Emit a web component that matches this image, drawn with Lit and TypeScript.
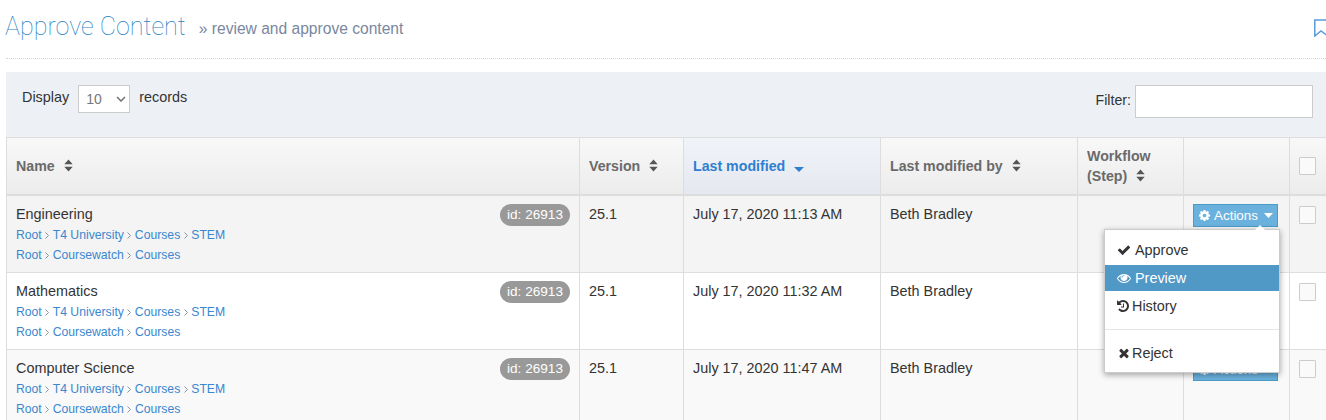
import { LitElement, html, css, svg } from "lit";
import { customElement } from "lit/decorators.js";

const P = {
  check: "M1671 566q0 40-28 68l-724 724-136 136q-28 28-68 28t-68-28l-136-136-362-362q-28-28-28-68t28-68l136-136q28-28 68-28t68 28l294 295 656-657q28-28 68-28t68 28l136 136q28 28 28 68z",
  times: "M1490 1322q0 40-28 68l-136 136q-28 28-68 28t-68-28l-294-294-294 294q-28 28-68 28t-68-28l-136-136q-28-28-28-68t28-68l294-294-294-294q-28-28-28-68t28-68l136-136q28-28 68-28t68 28l294 294 294-294q28-28 68-28t68 28l136 136q28 28 28 68t-28 68l-294 294 294 294q28 28 28 68z",
  eye: "M1664 960q-152-236-381-353 61 104 61 225 0 185-131.500 316.500t-316.500 131.500-316.500-131.500-131.500-316.500q0-121 61-225-229 117-381 353 133 205 333.500 326.500t434.500 121.500 434.500-121.500 333.500-326.500zm-720-384q0-20-14-34t-34-14q-125 0-214.500 89.500t-89.500 214.500q0 20 14 34t34 14 34-14 14-34q0-86 61-147t147-61q20 0 34-14t14-34zm848 384q0 34-20 69-140 230-376.500 368.500t-499.500 138.500-499.500-139-376.500-368q-20-35-20-69t20-69q140-229 376.500-368t499.500-139 499.500 139 376.500 368q20 35 20 69z",
  history: "M1664 896q0 156-61 298t-164 245-245 164-298 61q-172 0-327-72.500t-264-204.500q-7-10-6.500-22.500t8.500-20.500l137-138q10-9 25-9 16 2 23 12 73 95 179 147t225 52q104 0 198.500-40.500t163.500-109.500 109.500-163.500 40.500-198.500-40.500-198.500-109.500-163.500-163.500-109.500-198.500-40.500q-98 0-188 35.500t-160 101.500l137 138q31 30 14 69-17 40-59 40h-448q-26 0-45-19t-19-45v-448q0-42 40-59 39-17 69 14l130 129q107-101 244.500-156.500t284.500-55.500q156 0 298 61t245 164 164 245 61 298zm-640-288v448q0 14-9 23t-23 9h-320q-14 0-23-9t-9-23v-64q0-14 9-23t23-9h224v-352q0-14 9-23t23-9h64q14 0 23 9t9 23z",
  cog: "M1152 896q0-106-75-181t-181-75-181 75-75 181 75 181 181 75 181-75 75-181zm512-109v222q0 12-8 23t-20 13l-185 28q-19 54-39 91 35 50 107 138 10 12 10 25t-9 23q-27 37-99 108t-94 71q-12 0-26-9l-138-108q-44 23-91 38-16 136-29 186-7 28-36 28h-222q-14 0-24.500-8.500t-11.500-21.500l-28-184q-49-16-90-37l-141 107q-10 9-25 9-14 0-25-11-126-114-165-168-7-10-7-23 0-12 8-23 15-21 51-66.500t54-70.500q-27-50-41-99l-183-27q-13-2-21-12.500t-8-23.500v-222q0-12 8-23t19-13l186-28q14-46 39-92-40-57-107-138-10-12-10-24 0-10 9-23 26-36 98.500-107.500t94.500-71.500q13 0 26 10l138 107q44-23 91-38 16-136 29-186 7-28 36-28h222q14 0 24.500 8.500t11.500 21.500l28 184q49 16 90 37l142-107q9-9 24-9 13 0 25 10 129 119 165 170 7 8 7 22 0 12-8 23-15 21-51 66.500t-54 70.500q26 50 41 98l183 28q13 2 21 12.500t8 23.500z",
};
const fa = (d: string, size = 14) =>
  html`<svg class="fa" width=${size} height=${size} viewBox="0 0 1792 1792" fill="currentColor">${svg`<path d=${d}></path>`}</svg>`;

const sort = html`<svg class="sort" width="9" height="13" viewBox="0 0 9 13" fill="currentColor"><path d="M4.5 .5 L8.7 5.2 H.3 Z M.3 7.8 H8.7 L4.5 12.5 Z"></path></svg>`;
const sortDown = html`<svg class="sortdown" width="10" height="5" viewBox="0 0 10 5" fill="currentColor"><path d="M0 0 H10 L5 5 Z"></path></svg>`;
const caret = html`<svg class="caret" width="9" height="5" viewBox="0 0 9 5" fill="currentColor"><path d="M0 0 H9 L4.5 5 Z"></path></svg>`;

const ROWS = [
  { name: "Engineering", time: "July 17, 2020 11:13 AM", cls: "hover" },
  { name: "Mathematics", time: "July 17, 2020 11:32 AM", cls: "even" },
  { name: "Computer Science", time: "July 17, 2020 11:47 AM", cls: "odd" },
];

const crumbs = (items: string[]) =>
  html`<div class="crumb">${items.map((t, i) => html`${i ? html`<svg class="sep" width="4" height="7" viewBox="0 0 4 7" fill="none" stroke="#7a8a99" stroke-width="0.9"><path d="M.5 .5 L3.5 3.5 L.5 6.5"></path></svg>` : ""}<a>${t}</a>`)}</div>`;

@customElement("app-root")
export class AppRoot extends LitElement {
  static styles = css`
    :host {
      display: block;
      height: 420px;
      overflow: hidden;
      background: #fff;
      font-family: "Liberation Sans", Arial, sans-serif;
      font-size: 14.4px;
      color: #333;
      position: relative;
    }
    .page { padding-left: 6px; }
    .head {
      height: 58px;
      display: flex;
      align-items: flex-start;
      border-bottom: 1px dotted #d5d5d5;
      box-sizing: content-box;
    }
    h1 {
      margin: 10px 0 0 -1px;
      font-family: Roboto, sans-serif;
      font-weight: 100;
      font-size: 25.1px;
      line-height: 33px;
      color: #1f7fc4;
    }
    .sub {
      margin: 19px 0 0 13px;
      font-size: 15.6px;
      line-height: 20px;
      color: #7a87a0;
    }
    .bm { margin: 19px 0 0 auto; color: #5b9bd8; display: block; }
    .tools {
      margin-top: 13px;
      height: 65px;
      background: #edf1f6;
      display: flex;
      align-items: flex-start;
      padding: 13px 13px 0 16px;
      box-sizing: border-box;
    }
    .tools .lbl { margin-top: 3px; line-height: 18px; }
    .select {
      margin: 0 9px;
      width: 52px;
      height: 28px;
      box-sizing: border-box;
      background: #fff;
      border: 1px solid #ccc;
      display: flex;
      align-items: center;
      justify-content: space-between;
      padding: 0 3px 0 7px;
      color: #777;
      font-size: 14px;
    }
    .filter { margin-left: auto; display: flex; align-items: flex-start; }
    .filter .lbl { margin-top: 6px; margin-right: 4px; font-size: 14.2px; }
    .input {
      width: 178px;
      height: 33px;
      box-sizing: border-box;
      background: #fff;
      border: 1px solid #ccc;
    }
    table {
      table-layout: fixed;
      border-collapse: separate;
      border-spacing: 0;
      width: 1320px;
    }
    th, td {
      box-sizing: border-box;
      border-left: 1px solid #ddd;
      padding: 0 9px;
      text-align: left;
      vertical-align: top;
    }
    th {
      height: 59px;
      border-top: 1px solid #ddd;
      border-bottom: 2px solid #ddd;
      background: linear-gradient(#f8f8f8, #ececec);
      color: #6a6a6a;
      font-size: 14.2px;
      line-height: 20px;
      font-weight: bold;
      vertical-align: middle;
    }
    th.active {
      background: linear-gradient(#f0f3f8, #e5e8f0);
      color: #2f7fd0;
    }
    .sort { margin-left: 5px; vertical-align: -1px; color: #555; }
    .sortdown { margin-left: 5px; vertical-align: -1px; color: #2f7fd0; }
    td {
      height: 77px;
      border-bottom: 1px solid #ddd;
      padding-top: 8px;
      line-height: 20px;
      color: #333;
    }
    tr.hover td { background: #f4f4f4; }
    tr.even td { background: #fff; }
    tr.odd td { background: #f9f9f9; }
    .namewrap { position: relative; }
    .badge {
      position: absolute;
      right: 0;
      top: 0;
      height: 22px;
      width: 70px;
      border-radius: 11px;
      background: #999;
      color: #fff;
      font-size: 13.6px;
      line-height: 22px;
      text-align: center;
    }
    .names { margin-bottom: 1px; }
    .crumb { font-size: 12.2px; line-height: 20px; color: #3a87cf; }
    .crumb a { color: #3a87cf; }
    .sep { margin: 0 3.5px; vertical-align: 0; }
    .actionscell { position: relative; }
    .btn {
      width: 85px;
      height: 23px;
      box-sizing: border-box;
      background: #6bb1de;
      border: 1px solid #4a9cc7;
      color: #fff;
      font-size: 13.4px;
      display: flex;
      align-items: center;
      justify-content: center;
      gap: 3px;
    }
    .caret { margin-left: 3px; }
    .menu {
      position: absolute;
      top: 25px;
      left: -89px;
      width: 176px;
      height: 144px;
      box-sizing: border-box;
      background: #fff;
      border: 1px solid #ccc;
      box-shadow: 0 2px 6px rgba(0, 0, 0, 0.35);
      padding-top: 7px;
      z-index: 5;
      color: #333;
      font-size: 14.4px;
    }
    .menu::before {
      content: "";
      position: absolute;
      top: -5px;
      right: 14px;
      border-left: 5px solid transparent;
      border-right: 5px solid transparent;
      border-bottom: 5px solid #fff;
    }
    .item {
      height: 26px;
      margin-bottom: 2px;
      line-height: 26px;
      display: flex;
      align-items: center;
      padding-left: 12px;
      gap: 4px;
    }
    .item.h { padding-left: 11px; gap: 2px; }
    .item.r { gap: 1px; }
    .item.sel { background: #5098c6; color: #fff; }
    .divider { height: 1px; background: #e5e5e5; margin: 10px 0 10px; }
    .cb {
      width: 17px;
      height: 18px;
      box-sizing: border-box;
      border: 1px solid #ccc;
      background: #fafafa;
      border-radius: 1px;
    }
    td .cb { margin-top: 2px; }
  `;

  render() {
    return html`<div class="page">
      <div class="head">
        <h1>Approve Content</h1>
        <div class="sub">» review and approve content</div>
        <svg class="bm" width="12" height="18" viewBox="0 0 12 18" fill="none" stroke="currentColor" stroke-width="1.5"><path d="M14 1 H.8 V17 L7 12 L14 17"></path></svg>
      </div>
      <div class="tools">
        <span class="lbl">Display</span>
        <div class="select">
          <span>10</span>
          <svg width="10" height="6" viewBox="0 0 10 6" fill="none" stroke="#777" stroke-width="1.6"><path d="M1 1 L5 5 L9 1"></path></svg>
        </div>
        <span class="lbl">records</span>
        <div class="filter"><span class="lbl">Filter:</span><div class="input"></div></div>
      </div>
      <table>
        <colgroup>
          <col style="width:573px" /><col style="width:104px" /><col style="width:197px" /><col style="width:197px" /><col style="width:106px" /><col style="width:106px" /><col style="width:37px" />
        </colgroup>
        <thead>
          <tr>
            <th>Name ${sort}</th>
            <th>Version ${sort}</th>
            <th class="active">Last modified ${sortDown}</th>
            <th>Last modified by ${sort}</th>
            <th>Workflow<br />(Step) ${sort}</th>
            <th></th>
            <th><div class="cb"></div></th>
          </tr>
        </thead>
        <tbody>
          ${ROWS.map(
            (r, i) => html`<tr class=${r.cls}>
              <td>
                <div class="namewrap">
                  <div class="names">${r.name}</div>
                  <span class="badge">id: 26913</span>
                  ${crumbs(["Root", "T4 University", "Courses", "STEM"])}
                  ${crumbs(["Root", "Coursewatch", "Courses"])}
                </div>
              </td>
              <td>25.1</td>
              <td>${r.time}</td>
              <td>Beth Bradley</td>
              <td></td>
              <td>
                <div class="actionscell">
                  <div class="btn">${fa(P.cog, 13)}<span>Actions</span>${caret}</div>
                  ${i === 0
                    ? html`<div class="menu">
                        <div class="item">${fa(P.check)}<span>Approve</span></div>
                        <div class="item sel">${fa(P.eye)}<span>Preview</span></div>
                        <div class="item h">${fa(P.history)}<span>History</span></div>
                        <div class="divider"></div>
                        <div class="item r">${fa(P.times)}<span>Reject</span></div>
                      </div>`
                    : ""}
                </div>
              </td>
              <td><div class="cb"></div></td>
            </tr>`
          )}
        </tbody>
      </table>
    </div>`;
  }
}
